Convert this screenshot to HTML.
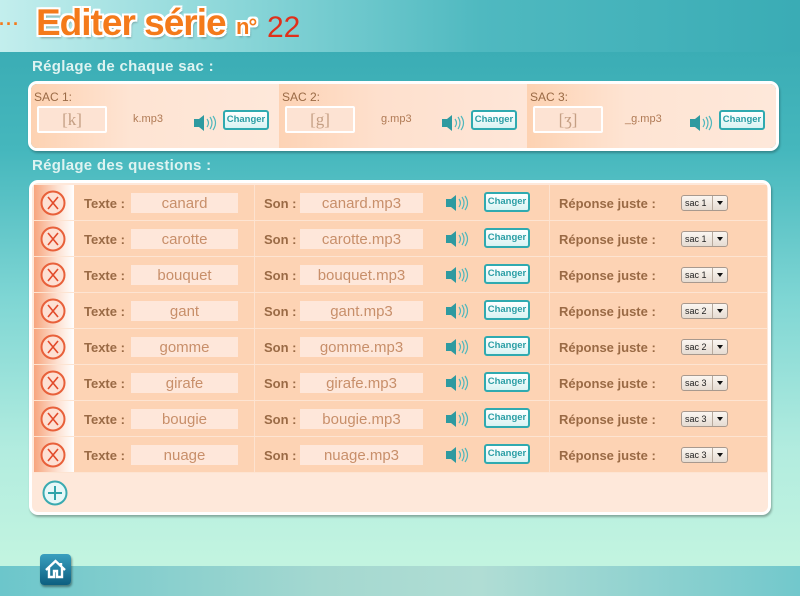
<!DOCTYPE html>
<html><head><meta charset="utf-8">
<style>
*{margin:0;padding:0;box-sizing:border-box}
body{width:800px;height:596px;overflow:hidden;position:relative;font-family:"Liberation Sans",sans-serif;
background:linear-gradient(180deg,#3badb5 52px,#45b7bd 150px,#7fd6d4 300px,#b2ecdf 450px,#c2f4e0 560px);}
.a{position:absolute}
#hdr{left:0;top:0;width:800px;height:52px;background:linear-gradient(90deg,#c3eeed 0,#8ad6d8 30%,#4fb9c0 60%,#3aacb5 100%)}
.title{font-weight:bold;color:#f47a1a;font-size:37px;letter-spacing:-1px;
text-shadow:-2px -2px 0 #fff,2px -2px 0 #fff,-2px 2px 0 #fff,2px 2px 0 #fff,0 2px 0 #fff,0 -2px 0 #fff,2px 0 0 #fff,-2px 0 0 #fff,2px 3px 2px rgba(0,0,0,.3)}
.sec{color:#def3f1;font-weight:bold;font-size:15px;letter-spacing:.3px}
#p1{left:28px;top:81px;width:751px;height:70px;border:3px solid #fff;border-radius:9px;overflow:hidden;box-shadow:1px 2px 2px rgba(0,0,0,.25);display:flex}
.sac{width:250px;height:100%;position:relative;background:linear-gradient(90deg,#fdd2b2,#fee4d3 40%,#fee8da)}
.sac .lb{position:absolute;left:3px;top:6px;font-size:12px;color:#9a6a45}
.sac .in{position:absolute;left:6px;top:22px;width:70px;height:27px;border:2px solid #fff;background:#fde3d3;border-radius:2px;font-family:"Liberation Serif",serif;font-size:17px;color:#c59f84;text-align:center;line-height:23px}
.sac .f{position:absolute;left:102px;top:29px;font-size:11px;color:#b07a55}
.spk{position:absolute;width:24px;height:16px}
.chg{position:absolute;width:46px;height:20px;border:2px solid #2faab0;border-radius:3px;background:linear-gradient(#fff,#d8f3f3);color:#2a9ea5;font-weight:bold;font-size:9.5px;text-align:center;line-height:16px}
#p2{left:29px;top:180px;width:742px;height:335px;border:3px solid #fff;border-radius:9px;overflow:hidden;background:#fee8da;box-shadow:1px 2px 2px rgba(0,0,0,.3)}
.row{position:absolute;left:2px;width:733px;height:36px;background:#fdd3b4;border-bottom:1px solid #fde4d2}
.row .x{position:absolute;left:0;top:0;width:40px;height:35px;background:linear-gradient(90deg,#f7a57e,#fde2d3 60%,#fff)}
.row .lab{position:absolute;font-weight:bold;color:#9a6a45;font-size:13px;top:11px}
.row .box{position:absolute;top:8px;height:20px;background:#fee7da;color:#c88f6a;font-size:15px;text-align:center;line-height:21px}
.row .dv{position:absolute;top:0;width:1px;height:35px;background:#fde2cf}
.sel{position:absolute;top:10px;left:647px;width:47px;height:16px;border:1px solid #a8998e;border-radius:3px;background:linear-gradient(#fbf6f1,#e6dcd2);font-size:9px;line-height:14px;padding-left:3px;color:#222}
.sel:after{content:"";position:absolute;left:30px;top:0;width:1px;height:14px;background:#b8aa9d}
.sel i{position:absolute;left:35px;top:5px;border-left:3px solid transparent;border-right:3px solid transparent;border-top:4px solid #111}
#bot{left:0;top:566px;width:800px;height:30px;background:linear-gradient(90deg,#6cc6cb,#a4d8d0 40%,#b0ddd4 60%,#72c8cc)}
</style></head><body>
<div id="hdr" class="a"></div>
<div class="a" style="left:-1px;top:14px;color:#f47a1a;font-size:18px;font-weight:bold;letter-spacing:1px">···</div>
<div class="a title" style="left:36px;top:2px">Editer série</div>
<div class="a title" style="left:236px;top:14px;font-size:22px">n°</div>
<div class="a" style="left:267px;top:11px;font-size:30px;color:#e0301a">22</div>

<div class="a sec" style="left:32px;top:58px">Réglage de chaque sac :</div>
<div id="p1" class="a">
 <div class="sac"><div class="lb">SAC 1:</div><div class="in">[k]</div><div class="f">k.mp3</div>
 <svg class="spk" style="left:162px;top:31px" viewBox="0 0 24 16"><path d="M1 4h5l5-4v16l-5-4H1z" fill="#2e9aa0"/><path d="M14 4q3 4 0 8M17 2q4 6 0 12M20 1q5 7 0 14" stroke="#4fb7bc" fill="none" stroke-width="1.2"/></svg>
 <div class="chg" style="left:192px;top:26px">Changer</div></div>
 <div class="sac" style="background:linear-gradient(90deg,#fdd3b5,#fee0cd 40%,#fee6d8)"><div class="lb">SAC 2:</div><div class="in">[g]</div><div class="f">g.mp3</div>
 <svg class="spk" style="left:162px;top:31px" viewBox="0 0 24 16"><path d="M1 4h5l5-4v16l-5-4H1z" fill="#2e9aa0"/><path d="M14 4q3 4 0 8M17 2q4 6 0 12M20 1q5 7 0 14" stroke="#4fb7bc" fill="none" stroke-width="1.2"/></svg>
 <div class="chg" style="left:192px;top:26px">Changer</div></div>
 <div class="sac" style="width:251px"><div class="lb">SAC 3:</div><div class="in">[ʒ]</div><div class="f" style="left:98px">_g.mp3</div>
 <svg class="spk" style="left:162px;top:31px" viewBox="0 0 24 16"><path d="M1 4h5l5-4v16l-5-4H1z" fill="#2e9aa0"/><path d="M14 4q3 4 0 8M17 2q4 6 0 12M20 1q5 7 0 14" stroke="#4fb7bc" fill="none" stroke-width="1.2"/></svg>
 <div class="chg" style="left:192px;top:26px">Changer</div></div>
</div>

<div class="a sec" style="left:32px;top:157px">Réglage des questions :</div>
<div id="p2" class="a">
<div id="rows"></div>
<svg class="a" style="left:10px;top:297px" width="26" height="26" viewBox="0 0 26 26"><circle cx="13" cy="13" r="11.5" fill="#e6f8f8" stroke="#3aaab0" stroke-width="2"/><path d="M13 6v14M6 13h14" stroke="#2ea4aa" stroke-width="2"/></svg>
</div>

<div id="bot" class="a"></div>
<div class="a" style="left:40px;top:554px;width:31px;height:31px;border-radius:4px;background:linear-gradient(#3a9fbf,#0d5f80);box-shadow:1px 2px 2px rgba(0,0,0,.4)">
<svg width="31" height="31" viewBox="0 0 31 31"><path d="M6 16L15.5 7 25 16M9 14v9h5v-6h3v6h5v-9M21 9v3" stroke="#fff" stroke-width="2.4" fill="none" stroke-linejoin="miter"/></svg></div>

<script>
var d=[["canard",1],["carotte",1],["bouquet",1],["gant",2],["gomme",2],["girafe",3],["bougie",3],["nuage",3]],h="";
d.forEach(function(r,i){h+='<div class="row" style="top:'+(2+i*36)+'px"><div class="x"><svg style="position:absolute;left:6px;top:5px" width="26" height="26" viewBox="0 0 26 26"><circle cx="13" cy="13" r="11.5" fill="#fde0d3" stroke="#e8603a" stroke-width="2"/><path d="M8 7l10 12M18 7L8 19" stroke="#e24a2a" stroke-width="1.6"/></svg></div>'+
'<div class="lab" style="left:50px">Texte :</div><div class="box" style="left:97px;width:107px">'+r[0]+'</div><div class="dv" style="left:220px"></div>'+
'<div class="lab" style="left:230px">Son :</div><div class="box" style="left:266px;width:123px">'+r[0]+'.mp3</div>'+
'<svg class="spk" style="left:411px;top:10px" viewBox="0 0 24 16"><path d="M1 4h5l5-4v16l-5-4H1z" fill="#2e9aa0"/><path d="M14 4q3 4 0 8M17 2q4 6 0 12M20 1q5 7 0 14" stroke="#4fb7bc" fill="none" stroke-width="1.2"/></svg>'+
'<div class="chg" style="left:450px;top:7px">Changer</div><div class="dv" style="left:515px"></div>'+
'<div class="lab" style="left:525px">Réponse juste :</div><div class="sel">sac '+r[1]+'<i></i></div></div>';});
document.getElementById("rows").innerHTML=h;
</script>
</body></html>
